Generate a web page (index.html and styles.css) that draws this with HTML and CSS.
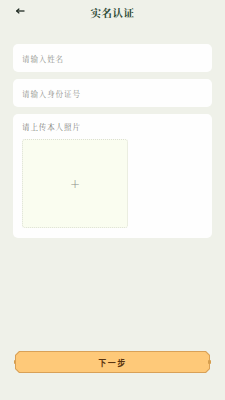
FILE: index.html
```html
<!DOCTYPE html>
<html lang="zh">
<head>
<meta charset="utf-8">
<link rel="stylesheet" href="styles.css">
</head>
<body>
<div class="page">
  <header class="header">
    <span class="back">
      <svg width="9" height="6" viewBox="0 0 9 6"><path d="M0.5 3H8.5" stroke="#1f2a22" stroke-width="1.3"/><path d="M3.3 0.6L0.8 3L3.3 5.4" fill="none" stroke="#1f2a22" stroke-width="1.3"/></svg>
    </span>
    <h1 class="title">实名认证</h1>
  </header>
  <div class="card field"><span class="ph">请输入姓名</span></div>
  <div class="card field"><span class="ph">请输入身份证号</span></div>
  <div class="card upload-card">
    <div class="label">请上传本人照片</div>
    <div class="upload"><span class="plus">+</span></div>
  </div>
  <div class="spacer"></div>
  <div class="btn-wrap">
    <div class="btn"><div class="btn-inner">下一步</div></div>
  </div>
</div>
</body>
</html>
```
FILE: styles.css
```css
* { box-sizing: border-box; margin: 0; padding: 0; }
html, body { width: 225px; height: 400px; }
body {
  background: #eff1e9;
  font-family: "Noto Serif CJK SC", "Noto Sans CJK SC", serif;
}
.page {
  height: 400px;
  display: flex;
  flex-direction: column;
  padding: 0 13px;
}
.header {
  height: 24px;
  display: flex;
  align-items: center;
  justify-content: center;
  position: relative;
  margin-bottom: 20px;
}
.back {
  position: absolute;
  left: 3px;
  top: 8px;
  display: flex;
}
.title {
  font-size: 10.5px;
  font-weight: 700;
  color: #2c4a35;
  letter-spacing: 0.5px;
}
.card {
  background: #fefefe;
  border-radius: 5px;
}
.field {
  height: 28px;
  display: flex;
  align-items: center;
  padding-left: 9px;
  margin-bottom: 7px;
}
.ph {
  font-size: 7.5px;
  color: #8e918c;
  letter-spacing: 0.9px;
}
.upload-card {
  height: 124px;
  padding: 8px 9px;
}
.label {
  font-size: 7.5px;
  color: #7e817c;
  letter-spacing: 0.9px;
  line-height: 10px;
  margin-bottom: 7px;
}
.upload {
  width: 106px;
  height: 89px;
  background: #fafdf0;
  border: 1px dotted #dcdfd2;
  border-radius: 3px;
  display: flex;
  align-items: center;
  justify-content: center;
}
.plus {
  font-family: "DejaVu Sans", sans-serif;
  font-size: 12px;
  color: #8c8f88;
  font-weight: 300;
  line-height: 1;
}
.spacer { flex: 1; }
.btn-wrap {
  padding: 0 2px;
  margin-bottom: 27px;
  position: relative;
}
.btn-wrap::before, .btn-wrap::after {
  content: "";
  position: absolute;
  top: 9px;
  width: 3px;
  height: 4px;
  background: #d69e4e;
  border-radius: 1px;
}
.btn-wrap::before { left: 1px; }
.btn-wrap::after { right: 1px; }
.btn {
  height: 22px;
  background: #d9a157;
  clip-path: polygon(4px 0, calc(100% - 4px) 0, 100% 4px, 100% calc(100% - 4px), calc(100% - 4px) 100%, 4px 100%, 0 calc(100% - 4px), 0 4px);
  padding: 1px;
}
.btn-inner {
  height: 100%;
  background: #fec979;
  clip-path: polygon(3.6px 0, calc(100% - 3.6px) 0, 100% 3.6px, 100% calc(100% - 3.6px), calc(100% - 3.6px) 100%, 3.6px 100%, 0 calc(100% - 3.6px), 0 3.6px);
  display: flex;
  align-items: center;
  justify-content: center;
  font-family: "Noto Sans CJK SC", sans-serif;
  font-size: 8px;
  font-weight: 700;
  color: #5a3410;
  letter-spacing: 1.5px;
}
```
